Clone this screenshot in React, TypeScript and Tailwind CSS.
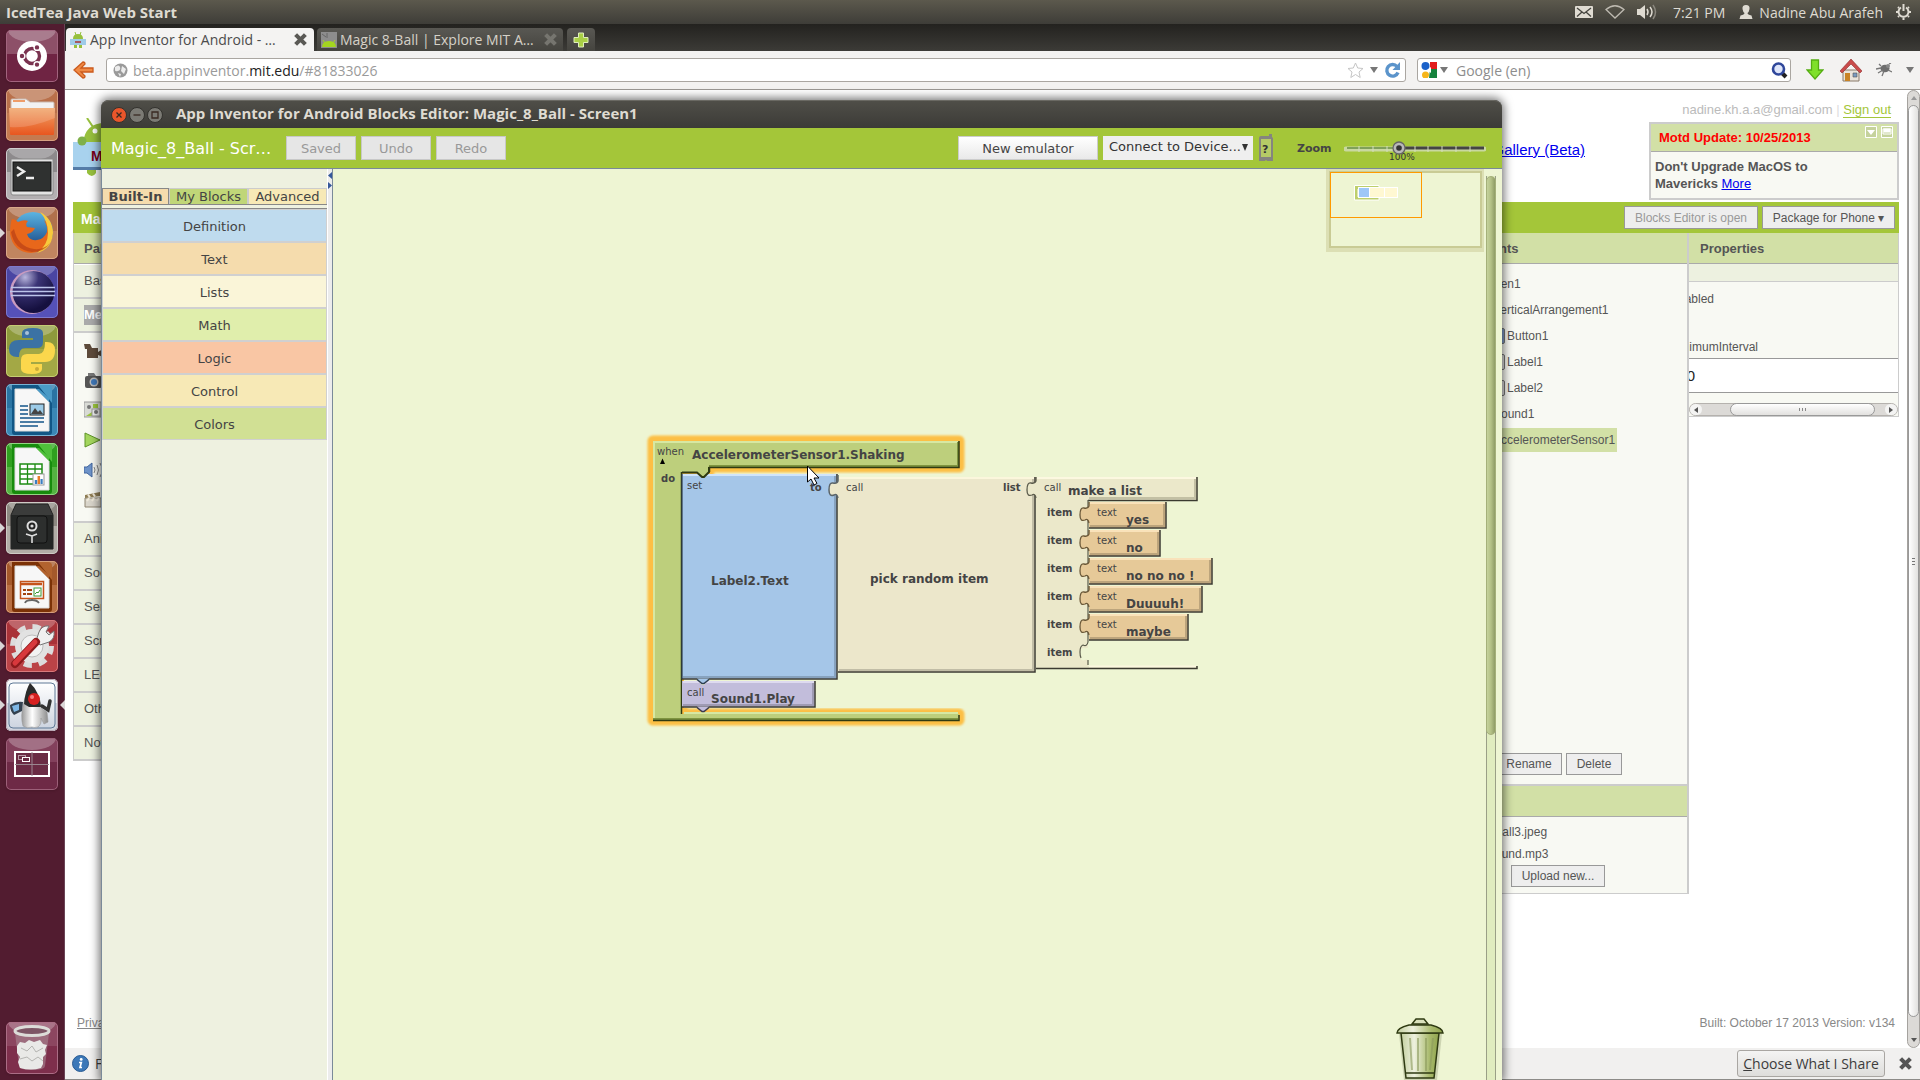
import React from "react";

const UI = "font-['Open_Sans','Noto_Sans',sans-serif]";
const ARIAL = "font-['Liberation_Sans',Arial,sans-serif]";
const DEJAVU = "font-['DejaVu_Sans',Verdana,sans-serif]";

/* ---------- launcher ---------- */

function Page({ dark, mid }: { dark: string; mid: string }) {
  return (
    <>
      <path d="M6 1h31l9 9v38a3 3 0 0 1-3 3H9a3 3 0 0 1-3-3z" fill={dark} />
      <path d="M32 1h10a4 4 0 0 1 4 4v14z" fill={mid} />
      <path d="M9 5h21l13 13v29H9z" fill="#f7f7f7" stroke="#ddd" />
      <path d="M30 5l13 13V14L33 5z" fill={mid} />
    </>
  );
}

type Tile = { name: string; from: string; to: string; edge: string; left?: boolean; right?: boolean; art: React.ReactNode };

const tiles: Tile[] = [
  {
    name: "Dash home", from: "#8d5068", to: "#6f2443", edge: "#a2647e",
    art: (
      <>
        <circle cx="26" cy="26" r="15" fill="#fff" />
        <circle cx="26" cy="26" r="7.5" fill="none" stroke="#7a3350" strokeWidth="3.4" />
        <g fill="#7a3350" stroke="#fff" strokeWidth="1.4">
          <circle cx="16" cy="26" r="2.9" /><circle cx="31" cy="17.4" r="2.9" /><circle cx="31" cy="34.6" r="2.9" />
        </g>
      </>
    ),
  },
  {
    name: "Home folder", from: "#b9704a", to: "#c47a50", edge: "#d7a183",
    art: (
      <>
        <path d="M5 11q0-1 1-1h14l4 3h23q1 0 1 1v8H5z" fill="#f2f2f2" stroke="#c9b8ae" />
        <path d="M7 12h12" stroke="#ee9d6a" strokeWidth="2" />
        <path d="M3 19h46l-1 26q0 1-1 1H5q-1 0-1-1z" fill="url(#folder)" />
        <path d="M3 19h46v10Q22 40 4 38z" fill="#fff" opacity=".16" />
      </>
    ),
  },
  {
    name: "Terminal", from: "#8d8a8c", to: "#b3afb1", edge: "#d0cdcf",
    art: (
      <>
        <path d="M5 11h42v34q0 2-2 2H7q-2 0-2-2z" fill="#e3e3e3" stroke="#888" />
        <rect x="7" y="14" width="38" height="29" fill="#2f3130" stroke="#111" />
        <path d="M11 19l7 4.500-7 4.500M20 30h8" fill="none" stroke="#eee" strokeWidth="2.400" />
      </>
    ),
  },
  {
    name: "Firefox", from: "#b0714c", to: "#c08560", edge: "#d9a88a", left: true,
    art: (
      <>
        <circle cx="27" cy="25" r="20" fill="url(#globe)" />
        <path d="M6 12q3 0 6 3 6-3 10-1-3 3-1 6l8 1q-2 5-8 6 2 7 10 6 7-1 10-8 1-5-3-12 7 5 7 14 0 17-20 19Q7 45 4 27q0-10 2-15z" fill="#e8671b" />
        <path d="M34 5q13 7 13 21-1 16-16 20 11-8 11-20 0-12-8-21z" fill="#f7c93c" />
        <path d="M5 25q3 18 21 20 12 0 18-9-6 7-16 6Q12 40 8 22z" fill="#b94015" opacity=".7" />
      </>
    ),
  },
  {
    name: "Eclipse", from: "#4a45a3", to: "#5551b8", edge: "#7d79cc",
    art: (
      <>
        <circle cx="26" cy="26" r="22" fill="#c99bc0" />
        <circle cx="27.500" cy="26" r="21" fill="url(#eclipse)" />
        <path d="M5 21.500h44M4 25.500h45M5 29.500h44" stroke="#bcc4ea" strokeWidth="1.300" />
      </>
    ),
  },
  {
    name: "Python", from: "#8e9a3c", to: "#a3a845", edge: "#c6cc74",
    art: (
      <>
        <path d="M16 8q0-5 11-5 10 0 10 5v9q0 6-6 6H19q-6 0-6 9-10 1-10-8 0-9 10-9h14v-2H16z" fill="#3b72a4" />
        <path d="M36 44q0 5-10 5-11 0-11-5v-9q0-6 6-6h12q6 0 6-12 10-1 10 8 0 12-10 12H25v2h11z" fill="#fbd74c" />
        <circle cx="21" cy="8" r="2" fill="#a9c2d8" /><circle cx="31" cy="44" r="2" fill="#c9ab39" />
      </>
    ),
  },
  {
    name: "LibreOffice Writer", from: "#2a74a3", to: "#3a87b5", edge: "#78b2d3",
    art: (
      <>
        <Page dark="#115685" mid="#4a9ac6" />
        <path d="M14 22h8M14 26h8M14 30h8M14 34h24M14 38h24M14 42h18" stroke="#15568a" strokeWidth="1.700" />
        <rect x="24" y="20" width="14" height="11" fill="#9ccbe8" stroke="#222" />
        <path d="M25 30l4-6 3 4 2-2 3 4z" fill="#444" />
      </>
    ),
  },
  {
    name: "LibreOffice Calc", from: "#2fa01f", to: "#55b342", edge: "#93d483",
    art: (
      <>
        <Page dark="#178c0c" mid="#4fc03a" />
        <rect x="14" y="21" width="22" height="20" fill="#fff" stroke="#1e8c14" strokeWidth="1.500" />
        <path d="M14 26h22M14 31h22M14 36h22M21.500 21v20M29 21v20" stroke="#1e8c14" strokeWidth="1.300" />
        <rect x="27" y="31" width="11" height="11" fill="#fff" stroke="#999" />
        <path d="M30 41v-4" stroke="#3b7ec2" strokeWidth="2.500" /><path d="M32.800 41v-8" stroke="#e87c2a" strokeWidth="2.500" /><path d="M35.600 41v-5" stroke="#3b7ec2" strokeWidth="2.200" />
      </>
    ),
  },
  {
    name: "Password safe", from: "#8d8881", to: "#b2ada7", edge: "#cfcbc6", left: true,
    art: (
      <>
        <path d="M10 2h32l5 11v34H5V13z" fill="#3b3c3b" stroke="#222" />
        <path d="M5 13h42v34H5z" fill="#242625" />
        <rect x="11" y="14" width="30" height="27" rx="3" fill="#2d2f2e" stroke="#111" />
        <circle cx="26" cy="24" r="4.500" fill="#222" stroke="#ddd" strokeWidth="2" />
        <circle cx="26" cy="24" r="1.600" fill="#ddd" />
        <path d="M26 34l-6-2M26 34l5-2M26 34v7" stroke="#ddd" strokeWidth="1.600" />
      </>
    ),
  },
  {
    name: "LibreOffice Impress", from: "#a5592b", to: "#b96f42", edge: "#d6a07e",
    art: (
      <>
        <Page dark="#7c3206" mid="#b2632f" />
        <path d="M15 23h21" stroke="#c5531a" strokeWidth="2.500" />
        <rect x="14.500" y="20.500" width="23" height="17" fill="none" stroke="#c5531a" strokeWidth="1.500" />
        <path d="M17 29h3M17 33h3M21 29h5M21 33h5" stroke="#a2430f" strokeWidth="2" />
        <rect x="28" y="27" width="7" height="8" fill="#fff" stroke="#3b9a35" /><path d="M29 33l2-2 1 1 2-3" fill="none" stroke="#3b9a35" />
        <path d="M19 42q1-3 7-3 5 0 7 3M26 38v2" fill="none" stroke="#666" strokeWidth="1.800" />
      </>
    ),
  },
  {
    name: "System tools", from: "#a93238", to: "#bb4347", edge: "#d77a7d", left: true,
    art: (
      <>
        <circle cx="26" cy="26" r="19" fill="none" stroke="#dcdcdc" strokeWidth="6" strokeDasharray="8 6.900" />
        <circle cx="26" cy="26" r="17" fill="#e2e2e2" />
        <circle cx="26" cy="26" r="11" fill="#f2f2f2" stroke="#bbb" />
        <path d="M30 21l3-9q3-7 10-6l-3 6 3 3 5-4q1 8-5 11l-9 3z" fill="#f0f0f0" stroke="#777" />
        <path d="M9 44L30 22" stroke="#8e1a1c" strokeWidth="8" strokeLinecap="round" />
        <path d="M9 43L29 22" stroke="#d8383c" strokeWidth="5" strokeLinecap="round" />
      </>
    ),
  },
  {
    name: "Java Web Start", from: "#f5f6f9", to: "#cfd3dd", edge: "#b9a6b2", left: true, right: true,
    art: (
      <>
        <rect x="3" y="4" width="46" height="45" rx="4" fill="url(#javabg)" stroke="#5e7896" />
        <path d="M24 4q2 3 5 8 6 9 7 18l5 3 1 10-4 2-3-6q1 6-3 9-4 1-6 0-5 2-9-1-3-10 1-24z" fill="url(#duke)" stroke="#999" strokeWidth=".6" />
        <path d="M24 4q-5 8-6 21l5 3h12Q33 12 24 4z" fill="#2b2b2b" />
        <path d="M4 26q6-4 13-3l-1 9-8 4q-4-4-4-10z" fill="#33414f" /><path d="M6 27l7-2v6l-5 2z" fill="#7db6e4" />
        <path d="M36 27l6 4 2-9" fill="none" stroke="#333" strokeWidth="3.500" strokeLinecap="round" />
        <circle cx="28" cy="20" r="6" fill="#d61f1f" /><circle cx="26" cy="18" r="2" fill="#f78080" />
      </>
    ),
  },
  {
    name: "Workspace switcher", from: "#83405c", to: "#6e2a46", edge: "#9c6079",
    art: (
      <>
        <rect x="9" y="14" width="34" height="24" fill="#6a2b44" stroke="#fff" strokeWidth="2" />
        <path d="M26 14v24M9 26.500h34" stroke="#9a8790" />
        <rect x="12.500" y="17.500" width="7" height="4" fill="none" stroke="#b79aa6" /><rect x="16.500" y="19.500" width="7" height="4" fill="#6a2b44" stroke="#fff" />
      </>
    ),
  },
];

const trashTile: Tile = {
  name: "Trash", from: "#8c4660", to: "#7e2f4c", edge: "#ab6d85",
  art: (
    <>
      <path d="M9 11l4 33q0 4 13 4t13-4l4-33z" fill="#a98793" opacity=".6" />
      <path d="M11 24l3-4 5 1 4-3 5 2 6-2 3 4 4 1-2 5 1 4-3 3v7l-2 4q-10 3-21 0l-2-6 2-5-3-4z" fill="#e9e9e7" />
      <path d="M15 26l6 3 5-5 4 6 7-4M14 37l7-2 5 4 6-4 5 4" stroke="#b5b5b2" fill="none" />
      <ellipse cx="26" cy="9" rx="17" ry="4.500" fill="#7d5565" stroke="#dcdcd8" strokeWidth="3" />
    </>
  ),
};

function LauncherTile({ t }: { t: Tile }) {
  return (
    <button aria-label={t.name} className="relative block h-[52px] w-full shrink-0">
      {t.left && <span className="absolute left-0 top-[21px] border-y-[5px] border-l-[5px] border-y-transparent border-l-[#d9d5d6]" />}
      {t.right && <span className="absolute right-0 top-[21px] border-y-[5px] border-r-[5px] border-y-transparent border-r-[#d9d5d6]" />}
      <svg viewBox="0 0 52 52" className="ml-1.5 h-[52px] w-[52px] overflow-hidden rounded-[5px] shadow">
        <rect width="52" height="52" fill={t.from} />
        <rect y="24" width="52" height="28" fill={t.to} />
        <ellipse cx="26" cy="0" rx="24" ry="12" fill="#fff" opacity=".25" />
        {t.art}
        <rect x=".5" y=".5" width="51" height="51" rx="4.500" fill="none" stroke={t.edge} />
      </svg>
    </button>
  );
}

function Launcher() {
  return (
    <nav className="flex w-[65px] shrink-0 flex-col gap-[7px] bg-[#521c30] pb-1.5 pt-1.5 shadow-[inset_-1px_0_0_#6a4456]">
      <svg width="0" height="0" className="absolute">
        <defs>
          <linearGradient id="folder" x2="0" y2="1"><stop offset="0" stopColor="#f0a468" /><stop offset="1" stopColor="#e8561f" /></linearGradient>
          <linearGradient id="globe" x2="0" y2="1"><stop offset="0" stopColor="#5bb4e2" /><stop offset="1" stopColor="#123c7c" /></linearGradient>
          <radialGradient id="eclipse" cx=".3" cy=".15" r=".8"><stop offset="0" stopColor="#b9b6de" /><stop offset=".4" stopColor="#3b3476" /><stop offset="1" stopColor="#15103f" /></radialGradient>
          <linearGradient id="javabg" x2="0" y2="1"><stop offset="0" stopColor="#fff" /><stop offset="1" stopColor="#cdd4e0" /></linearGradient>
          <linearGradient id="duke" x2="1" y2="0"><stop offset="0" stopColor="#9a9a9a" /><stop offset=".4" stopColor="#fff" /><stop offset="1" stopColor="#8c8c8c" /></linearGradient>
        </defs>
      </svg>
      {tiles.map((t) => <LauncherTile key={t.name} t={t} />)}
      <div className="mt-auto"><LauncherTile t={trashTile} /></div>
    </nav>
  );
}

/* ---------- top panel ---------- */

function TopPanel() {
  return (
    <header className={`flex h-6 shrink-0 items-center bg-gradient-to-b from-[#5c594d] to-[#3e3d38] px-1.5 text-[14px] text-[#dfdbd2] ${UI}`}>
      <h1 className="text-[15px] font-bold">IcedTea Java Web Start</h1>
      <div className="ml-auto flex items-center">
        <svg width="18" height="12" viewBox="0 0 18 12"><rect width="18" height="12" rx="1" fill="#dfdbd2" /><path d="M2 2l7 5.500L16 2M2 10.500l5-4.500M16 10.500L11 6" fill="none" stroke="#45443e" strokeWidth="1.300" /></svg>
        <svg width="20" height="14" viewBox="0 0 20 14" className="ml-3"><path d="M1 4.500Q10-3 19 4.500L10 13z" fill="none" stroke="#bdb9b0" strokeWidth="1.300" /></svg>
        <svg width="20" height="16" viewBox="0 0 20 16" className="ml-3"><path d="M0 5h3l5-4v14l-5-4H0z" fill="#dfdbd2" /><path d="M10 5q2 3 0 6M13 3q4 5 0 10" fill="none" stroke="#dfdbd2" strokeWidth="1.500" /><path d="M16 1q5 7 0 14" fill="none" stroke="#8a877e" strokeWidth="1.500" /></svg>
        <span className="ml-4">7:21 PM</span>
        <svg width="14" height="14" viewBox="0 0 14 14" className="ml-3.5"><path d="M7 0q4 0 3.500 4Q10 7 8.500 8q0 1.500 4 2.500l1 3.500H.5l1-3.500q4-1 4-2.500Q4 7 3.500 4 3 0 7 0z" fill="#dfdbd2" /></svg>
        <span className="ml-1.5">Nadine Abu Arafeh</span>
        <svg width="17" height="16" viewBox="0 0 17 16" className="ml-3 mr-0.5"><path d="M6 3.500a5 5 0 1 0 5 0" fill="none" stroke="#dfdbd2" strokeWidth="2" /><path d="M8.500 0v7M1 8h2M14 8h2M3 3l1 1M14 3l-1 1M3 13l1-1M14 13l-1-1M8.500 13.500V16" stroke="#dfdbd2" strokeWidth="2" /></svg>
      </div>
    </header>
  );
}

/* ---------- browser ---------- */

function Android({ className }: { className: string }) {
  return (
    <svg viewBox="0 0 16 16" className={className}>
      <path d="M3 7q0-5 5-5t5 5z" fill="#97c03d" /><path d="M5 0l1 3M11 0l-1 3" stroke="#97c03d" /><rect x="0" y="7" width="16" height="6" fill="#9fcbe8" /><path d="M4 13h3v3H4zM9 13h3v3H9z" fill="#97c03d" /><path d="M5 10h6" stroke="#a33" strokeWidth="1.500" />
    </svg>
  );
}

function Cross({ color }: { color: string }) {
  return <svg width="13" height="13" viewBox="0 0 12 12"><path d="M1.500 1.500l9 9M10.500 1.500l-9 9" stroke={color} strokeWidth="3.800" /></svg>;
}

function BrowserChrome() {
  return (
    <div className={UI}>
      <div className="flex h-[27px] items-end bg-gradient-to-b from-[#23221f] to-[#3c3b37] pl-[1px] text-[14px]">
        <div className="flex h-[23px] w-[248px] items-center rounded-t-[4px] bg-[#f4f3f2] pl-1 pr-[7px] text-[#4c4c4c]">
          <Android className="mr-1 h-4 w-4" />
          <span className="whitespace-nowrap">App Inventor for Android - …</span>
          <button aria-label="Close tab" className="ml-auto"><Cross color="#5a5955" /></button>
        </div>
        <div className="ml-[3px] flex h-[23px] w-[246px] items-center rounded-t-[4px] bg-gradient-to-b from-[#595853] to-[#45443f] pl-1 pr-1.5 text-[#d5d1c8]">
          <svg viewBox="0 0 16 16" className="mr-[3px] h-4 w-4"><rect width="16" height="16" fill="#8d8d8d" /><path d="M1 2l4 3M6 1v5" stroke="#666" /><path d="M1 15q0-6 7-6t7 6z" fill="#a4d61f" /><path d="M2 8l2 3M14 8l-2 3" stroke="#a4d61f" /></svg>
          <span className="whitespace-nowrap">Magic 8-Ball | Explore MIT A…</span>
          <button aria-label="Close tab" className="ml-auto"><Cross color="#76756f" /></button>
        </div>
        <button aria-label="New tab" className="ml-1 flex h-[23px] w-7 items-center justify-center rounded-t-[4px] bg-gradient-to-b from-[#595853] to-[#45443f]">
          <svg width="16" height="16" viewBox="0 0 16 16"><path d="M5.500 1h5v4.500H15v5h-4.500V15h-5v-4.500H1v-5h4.500z" fill="#a9cf46" stroke="#e0eebb" /></svg>
        </button>
      </div>
      <div className="flex h-[39px] items-center border-b border-[#9b9894] bg-[#f3f2f1] pl-[7px] pr-1.5 text-[14px]">
        <button aria-label="Back"><svg width="23" height="20" viewBox="0 0 23 20"><path d="M2 10l9-8q2 0 2 2L9 8h12v4H9l4 4q0 2-2 2z" fill="#f08a45" stroke="#cb5a1c" strokeWidth="1.300" /></svg></button>
        <label className="ml-[11px] flex h-6 flex-1 items-center rounded-[3px] border border-[#aaa6a1] bg-white pl-1.5 pr-1">
          <svg width="15" height="15" viewBox="0 0 15 15"><circle cx="7.500" cy="7.500" r="7" fill="#9a9a9a" /><path d="M2 4q4-3 5 0t-2 4-3-1zM9 3l4 3-2 5-3-3zM5 10l3 1-1 3z" fill="#ececec" /></svg>
          <span className="ml-[5px] flex-1 text-[#9a9a9a]">beta.appinventor.<span className="text-[#222]">mit.edu</span>/#81833026</span>
          <svg width="17" height="17" viewBox="0 0 17 17"><path d="M8.500 1l2.200 5 5.300.5-4 3.500 1.200 5.500-4.700-3-4.700 3L5 10 1 6.500 6.300 6z" fill="#fff" stroke="#c5c5c5" /></svg>
          <span className="ml-1.5 border-x-[4px] border-t-[6px] border-x-transparent border-t-[#777]" />
          <svg width="17" height="17" viewBox="0 0 17 17" className="ml-1.5"><path d="M13 4.500A5.800 5.800 0 1 0 14 10.500" fill="none" stroke="#5b94cb" strokeWidth="3.400" /><path d="M16 0v8H8.500z" fill="#5b94cb" /></svg>
        </label>
        <label className="ml-[11px] flex h-6 w-[374px] items-center rounded-[3px] border border-[#aaa6a1] bg-white pl-[3px] pr-0.5">
          <svg width="16" height="16" viewBox="0 0 16 16"><rect width="16" height="16" fill="#fff" /><path d="M9 0h7v8H9z" fill="#e21d1d" /><path d="M9 7h7v9H8z" fill="#16833d" /><circle cx="4.500" cy="4" r="4" fill="#1b62c9" /><circle cx="4.500" cy="13" r="3.500" fill="#f6b51b" /><path d="M6 8l4-3v6z" fill="#fff" /></svg>
          <span className="ml-[3px] border-x-[4px] border-t-[6px] border-x-transparent border-t-[#777]" />
          <input aria-label="Search" placeholder="Google (en)" className="ml-2 min-w-0 flex-1 outline-none placeholder:text-[#8d8d8d]" />
          <svg width="17" height="17" viewBox="0 0 17 17"><path d="M10 10l5 5" stroke="#222" strokeWidth="4" /><circle cx="7.500" cy="7" r="5.500" fill="#dfe6fa" stroke="#2f479b" strokeWidth="2.600" /></svg>
        </label>
        <svg width="18" height="22" viewBox="0 0 18 22" className="ml-[15px]"><path d="M5.500 1h7v10H17l-8 9-8-9h4.500z" fill="#7fe02a" stroke="#55ad12" strokeWidth="1.300" /></svg>
        <svg width="22" height="23" viewBox="0 0 22 23" className="ml-4"><path d="M3 11h16v11H3z" fill="#e9e4db" stroke="#8a7a6b" /><path d="M0 12L11 0l11 12-2 2-9-9-9 9z" fill="#c94b4b" stroke="#8e2e2e" strokeWidth=".6" /><path d="M5 14h5v8H5z" fill="#c98325" /><path d="M13 14h4v4h-4z" fill="#7a9cc0" stroke="#555" strokeWidth=".6" /></svg>
        <svg width="16" height="14" viewBox="0 0 16 14" className="ml-3.5"><ellipse cx="9" cy="5.500" rx="4.500" ry="3.800" fill="#6d6d6d" /><path d="M0 6l5-1M2 10l5-3M6 13l2-5M13 1l2-1M12 7l4 2M5 3L3 1" stroke="#777" strokeWidth="1.300" /><circle cx="12" cy="3" r="2" fill="#888" /></svg>
        <span className="ml-3.5 border-x-[4px] border-t-[6px] border-x-transparent border-t-[#777]" />
      </div>
    </div>
  );
}

const header = "flex h-[31px] items-center border-b border-[#aaa] bg-[#d2e0a6] pt-0.5 text-[13px] font-bold text-[#555]";
const webButton = "border border-[#999] bg-[#eee] text-[12px]";

const paletteMedia = [
  <svg key="v" width="20" height="18" viewBox="0 0 20 18"><path d="M0 3h6l2 4h6v10H3V8H1zM14 11l5-3v8l-5-2z" fill="#5e4b3b" /></svg>,
  <svg key="c" width="18" height="18" viewBox="0 0 18 18"><rect x="1" y="5" width="17" height="12" rx="2" fill="#555" /><path d="M4 5V2h6l2 3z" fill="#777" /><circle cx="10" cy="11" r="4.500" fill="#bbb" /><circle cx="10" cy="11" r="3" fill="#3f78b8" /></svg>,
  <svg key="p" width="18" height="18" viewBox="0 0 18 18"><rect y="1" width="17" height="15" fill="#d9dbd6" stroke="#999" /><circle cx="5" cy="6" r="2" fill="#777" /><path d="M2 15l6-4 3 4zM9 3h5v4H9z" fill="#9bc53d" /><rect x="8" y="8" width="8" height="7" fill="#eee" stroke="#999" /><circle cx="12" cy="11" r="2" fill="#777" /></svg>,
  <svg key="s" width="18" height="18" viewBox="0 0 18 18"><path d="M1 2l15 7L1 16z" fill="#a4d65e" stroke="#5e9428" /></svg>,
  <svg key="o" width="18" height="18" viewBox="0 0 18 18"><path d="M0 6h3l5-4v14l-5-4H0z" fill="#6e93c9" stroke="#41659d" /><path d="M10 6q2 3 0 6M13 4q3 5 0 10M16 2q4 7 0 14" fill="none" stroke="#888" /></svg>,
  <svg key="k" width="18" height="18" viewBox="0 0 18 18"><path d="M1 7h16v9H1z" fill="#d9d5cb" stroke="#8f8572" /><path d="M1 4l15-3v4L1 7z" fill="#8f7d55" /><path d="M4 3.500l2 3M9 2.500l2 3M5 7l-2 3M10 7l-2 3M15 7l-2 3" stroke="#efe9da" strokeWidth="2" /></svg>,
];

function PaletteRow({ children }: { children: React.ReactNode }) {
  return <div className="flex h-[34px] items-center border-b-2 border-[#ccc] bg-[#edf1e0] pl-2.5">{children}</div>;
}

function TreeItem({ name, indent, icon }: { name: string; indent: string; icon?: string }) {
  return (
    <li className={`flex h-[26px] items-center ${indent}`}>
      {icon && <span className={`mr-0.5 h-4 w-4 rounded-[2px] border border-[#777] ${icon}`} />}
      {name}
    </li>
  );
}

function InventorPage() {
  return (
    <main className={`flex min-h-0 flex-1 bg-white text-[13px] text-[#555] ${ARIAL}`}>
      <div className="flex min-w-0 flex-1 flex-col pl-2">
        <div className="mr-2 flex h-[112px] shrink-0 justify-between">
          <div className="relative mt-7 h-[62px] w-16">
            <svg width="64" height="62" viewBox="0 0 64 62">
              <path d="M14 0l6 9M50 0l-6 9" stroke="#97c03d" strokeWidth="2" /><path d="M10 25q2-20 22-20t22 20z" fill="#97c03d" /><circle cx="22" cy="13" r="2.500" fill="#fff" />
              <path d="M14 50h9v5q-4 6-9 0z" fill="#97c03d" /><rect y="24" width="64" height="28" fill="#a8d2ee" /><path d="M0 52h64v-3H0z" fill="#557ca8" /><circle cx="9" cy="23" r="4.500" fill="#7fb04a" />
            </svg>
            <span className="absolute left-[18px] top-[28px] text-[14px] font-bold text-[#7a0018]">MIT</span>
          </div>
          <div className="flex">
            <a href="#gallery" className="mr-16 mt-[49px] text-[15px] text-[#0000ee] underline">My Gallery (Beta)</a>
            <div className="w-[250px]">
              <p className="mr-2 mt-2.5 h-[22px] text-right text-[#bbb]">nadine.kh.a.a@gmail.com <span className="text-[#ddd]">|</span> <a href="#out" className="border-b border-[#a4c639] text-[#a4c639]">Sign out</a></p>
              <section className="border-2 border-[#ccc] bg-[#f8f9f3]">
                <div className="flex h-7 items-center border-b border-[#aaa] bg-[#d2e0a6] pl-2">
                  <h2 className="flex-1 font-bold text-[#f00]">Motd Update: 10/25/2013</h2>
                  <svg width="30" height="12" viewBox="0 0 30 12" className="mb-3 mr-0.5"><path d="M.5.5h11v11H.5zM16.500.5h11v11h-11z" fill="#c5d29c" stroke="#fff" /><path d="M2 4h8l-4 5zM18.500 2.500h7v4h-7z" fill="#fff" /><path d="M18 3h8v5h-8z" fill="none" stroke="#fff" /></svg>
                </div>
                <p className="h-[46px] pl-1 pt-1.5 font-bold leading-[17px]">Don't Upgrade MacOS to<br />Mavericks <a href="#more" className="font-normal text-[#0000ee] underline">More</a></p>
              </section>
            </div>
          </div>
        </div>
        <div className="mr-2 flex min-h-0 flex-1 flex-col">
          <div className="flex h-[31px] shrink-0 items-center bg-[#a4c639] pl-2 pr-1">
            <span className="flex-1 pt-1 text-[14px] font-bold text-white">Magic_8_Ball</span>
            <button disabled className={`${webButton} h-[23px] w-[134px] text-[#999]`}>Blocks Editor is open</button>
            <button className={`${webButton} ml-1 h-[23px] w-[133px]`}>Package for Phone ▾</button>
          </div>
          <div className="flex items-start">
            <aside className="w-[200px] border-l border-[#ccc]">
              <h2 className={`${header} pl-2.5`}>Palette</h2>
              <div className="pt-px">
                <PaletteRow>Basic</PaletteRow>
                <PaletteRow><span className="bg-[#aaa] font-bold text-white">Media</span></PaletteRow>
                <div className="flex h-[190px] flex-col gap-3 border-b-2 border-[#ccc] bg-[#f8f9f3] pl-2.5 pt-2">{paletteMedia}</div>
                {["Animation", "Social", "Sensors", "Screen Arrangement", "LEGO® MINDSTORMS®", "Other stuff", "Not ready for prime time"].map((s) => <PaletteRow key={s}>{s}</PaletteRow>)}
              </div>
            </aside>
            <div className="flex-1" />
            <div className="w-[260px] border-b border-r-2 border-[#ccc] bg-[#f8f9f3] text-[12px]">
              <h2 className={`${header} pl-2.5`}>Components</h2>
              <ul className="h-[489px] pt-[7px]">
                <TreeItem name="Screen1" indent="pl-[47px]" />
                <TreeItem name="VerticalArrangement1" indent="pl-[64px]" />
                <TreeItem name="Button1" indent="pl-[60px]" icon="bg-[#7f9cc9]" />
                <TreeItem name="Label1" indent="pl-[60px]" icon="bg-[#ddd]" />
                <TreeItem name="Label2" indent="pl-[60px]" icon="bg-[#ddd]" />
                <TreeItem name="Sound1" indent="pl-[64px]" />
                <li className="flex h-[26px] items-center pl-[64px]"><span className="bg-[#d2e0a6] pr-0.5 py-1 leading-4">AccelerometerSensor1</span></li>
              </ul>
              <div className="flex h-[31px] justify-end gap-1 pr-[65px]">
                <button className={`${webButton} h-[22px] w-[66px]`}>Rename</button>
                <button className={`${webButton} h-[22px] w-[56px]`}>Delete</button>
              </div>
              <h2 className={`${header} h-[33px] border-t-2 border-t-[#ccc] pl-2.5`}>Media</h2>
              <div className="h-[76px] pt-1">
                <p className="pl-[60px] leading-[22px]">8ball3.jpeg</p>
                <p className="pl-[60px] leading-[22px]">sound.mp3</p>
                <button className={`${webButton} ml-[82px] h-[22px] w-[94px]`}>Upload new...</button>
              </div>
            </div>
            <div className="w-[210px] border-b border-r border-[#ccc] bg-[#f8f9f3] text-[12px]">
              <h2 className={`${header} pl-[11px]`}>Properties</h2>
              <div className="h-[18px] border-b border-[#ccc] bg-[#edf1e0]" />
              <div className="overflow-hidden">
                <p className="ml-[-19px] mt-2 h-12">Enabled</p>
                <label className="ml-[-19px] block h-5" htmlFor="interval">MinimumInterval</label>
                <input id="interval" defaultValue="400" className="ml-[-20px] block h-[35px] w-[230px] border border-[#999] bg-white text-[15px] text-[#222]" />
              </div>
              <div className="mt-2.5 flex h-[13px] items-center justify-between rounded-full border border-[#b5b2ae] bg-[#dcdad7]">
                <span className="flex h-full w-3 items-center justify-center rounded-full bg-[#f4f4f3]"><i className="border-y-[3px] border-r-[4px] border-y-transparent border-r-[#555]" /></span>
                <span className="ml-7 flex h-[13px] flex-1 items-center justify-center gap-0.5 rounded-full border border-[#999] bg-gradient-to-b from-white to-[#e2e1df]"><i className="h-[3px] w-px bg-[#888]" /><i className="h-[3px] w-px bg-[#888]" /><i className="h-[3px] w-px bg-[#888]" /></span>
                <span className="ml-2.5 flex h-full w-3 items-center justify-center rounded-full bg-[#f4f4f3]"><i className="border-y-[3px] border-l-[4px] border-y-transparent border-l-[#555]" /></span>
              </div>
            </div>
          </div>
          <div className="mb-4 mt-auto flex justify-between pl-1 pr-1 text-[12px] text-[#888]">
            <a href="#privacy" className="underline">Privacy Policy and Terms of Use</a>
            <span>Built: October 17 2013 Version: v134</span>
          </div>
        </div>
      </div>
      <div className="flex w-[13px] shrink-0 flex-col items-center rounded-full border border-[#a5a29e] bg-[#dcdad7]">
        <span className="flex h-3.5 items-center"><i className="border-x-[3px] border-b-[4px] border-x-transparent border-b-[#999]" /></span>
        <span className="flex w-full flex-1 flex-col items-center justify-center gap-0.5 rounded-full border border-[#999] bg-gradient-to-r from-white to-[#e2e1df]"><i className="h-px w-[3px] bg-[#777]" /><i className="h-px w-[3px] bg-[#777]" /><i className="h-px w-[3px] bg-[#777]" /></span>
        <span className="mt-4 flex h-3.5 items-center"><i className="border-x-[3px] border-t-[4px] border-x-transparent border-t-[#555]" /></span>
      </div>
    </main>
  );
}

function NoticeBar() {
  return (
    <footer className={`flex h-8 shrink-0 items-center border-b border-[#8d8b88] bg-[#f1f0ef] pl-[7px] pr-2 text-[14px] text-[#3c3c3c] ${UI}`}>
      <svg width="17" height="17" viewBox="0 0 17 17" className="mr-1.5"><circle cx="8.500" cy="8.500" r="8" fill="#3c78b8" stroke="#2a5b93" /><circle cx="9.200" cy="4.400" r="1.400" fill="#fff" /><path d="M7 7.500h2.300L8 12.500h2" fill="none" stroke="#fff" strokeWidth="1.700" /></svg>
      <span className="flex-1">Firefox automatically sends some data to Mozilla</span>
      <button className="h-[27px] w-[148px] whitespace-nowrap rounded-[3px] border border-[#a9a6a2] bg-gradient-to-b from-[#f4f4f3] to-[#dedddb] text-center"><span className="underline">C</span>hoose What I Share</button>
      <button aria-label="Dismiss" className="ml-3.5"><Cross color="#555" /></button>
    </footer>
  );
}

/* ---------- blocks editor ---------- */

const drawers = [
  ["Definition", "bg-[#bfdbee]"],
  ["Text", "bg-[#f5dcad]"],
  ["Lists", "bg-[#faf5d8]"],
  ["Math", "bg-[#e0eeac]"],
  ["Logic", "bg-[#f9c6a4]"],
  ["Control", "bg-[#f7e9b6]"],
  ["Colors", "bg-[#d1e094]"],
];

function plug() {
  return "q-1-5-4-3-5 2-5-5 0-8 4-7 4 1 5-2";
}
function pluggedBlock(x: number, y: number, right: number, bottom: number) {
  return `M${x} ${y}H${right}V${bottom}H${x}V${y + 21}${plug()}Z`;
}

function Shape({ d, fill, light, x, y, right, bottom }: { d: string; fill: string; light: string; x: number; y: number; right: number; bottom: number }) {
  return (
    <g fill="none">
      <path d={d} fill={fill} />
      <path d={`M${x + 1} ${y + 1}H${right - 1}`} stroke={light} strokeWidth="2" />
      <path d={`M${right - 2} ${y + 2}V${bottom - 2}H${x + 1}`} stroke="#000" strokeOpacity=".18" strokeWidth="2" />
      <path d={`M${right} ${y}V${bottom}H${x}`} stroke="#3b3a33" strokeWidth="1.500" />
    </g>
  );
}

const answers: [string, number][] = [["yes", 1166], ["no", 1160], ["no no no !", 1212], ["Duuuuh!", 1202], ["maybe", 1188]];

function Blocks() {
  const green = "M653 441H959V467H709V472L707 472L704 476H702L698 472H682V714H959V720H653Z";
  const blue = "M682 474H698L702 478H704L708 474H837V679H708L704 683H702L698 679H682Z";
  const sound = "M682 681H698L702 685H704L708 681H815V707H708L704 711H702L698 707H682Z";
  const make = "M1036 477H1197V500H1088V666H1197V668H1036V498q-1-5-4-3-5 2-5-5 0-8 4-7 4 1 5-2Z";
  return (
    <svg width="600" height="310" viewBox="640 425 600 310" className={`absolute left-[307px] top-[256px] ${DEJAVU}`}>
      <defs>
        <filter id="soft" x="-10%" y="-10%" width="120%" height="120%"><feGaussianBlur stdDeviation="1" /></filter>
      </defs>
      <path d={green} fill="#fcbf45" stroke="#fcbf45" strokeWidth="11" strokeLinejoin="round" filter="url(#soft)" />
      <path d="M684 474H970V708H684Z" fill="#eef5d3" />
      <path d={green} fill="#bdcf7c" />
      <path d="M654 719V442H958M684 713H958" fill="none" stroke="#d7e8a2" strokeWidth="2" />
      <path d="M958 442V466H709M653 719H958" fill="none" stroke="#7f9440" strokeWidth="2" />
      <path d="M959 441V467.500H709.500V472M653 720.500H959V715M681.500 714V472" fill="none" stroke="#2f3a12" strokeWidth="1.500" />
      <Shape d={blue} fill="#a5c6e8" light="#cfe4fa" x={682} y={474} right={837} bottom={679} />
      <path d="M682 474V679" stroke="#2d3d50" strokeWidth="1.200" />
      <path d="M697 470V472.500L702 477H704L709 472.500V470Z" fill="#bdcf7c" />
      <path d="M682 472.500H697L702 477H704L709 472V467" fill="none" stroke="#2f3a12" strokeWidth="2" />
      <Shape d={sound} fill="#c2bddb" light="#dedaf0" x={682} y={681} right={815} bottom={707} />
      <path d="M697 678.500L702 683.500H704L709 678.500" fill="#a5c6e8" />
      <path d="M697 679.500L702 683.500H704L709 679.500" fill="none" stroke="#2d3d50" strokeWidth="1.500" />
      <path d="M697 706.500L702 711.500H704L709 706.500" fill="#c2bddb" />
      <path d="M697 707.500L702 711.500H704L709 707.500" fill="none" stroke="#3b3a4c" strokeWidth="1.500" />
      <Shape d={pluggedBlock(838, 477, 1035, 672)} fill="#ece7cb" light="#fbf6dc" x={838} y={477} right={1035} bottom={672} />
      <path d={`M838 498${plug()}V475`} fill="none" stroke="#5b6468" strokeWidth="1.500" />
      <path d={make} fill="#ebe8ca" />
      <path d="M1037 478H1196M1089 666.500H1196" stroke="#fcf8e0" strokeWidth="2" />
      <path d="M1195 479V498H1089" fill="none" stroke="#c3c0a4" strokeWidth="2" />
      <path d="M1197 477V500.500H1088M1036 668.500H1197V666" fill="none" stroke="#3b3a30" strokeWidth="1.500" />
      <path d={`M1036 498${plug()}V477`} fill="none" stroke="#5b5b4b" strokeWidth="1.300" />
      <path d={`M1089 663${plug()}V663Z`} fill="#eef5d3" />
      <path d="M1088 500V642q-1 5-5 3-3 1-3 7 0 4 1 6M1088 660v5" fill="none" stroke="#5b5b4b" strokeWidth="1.200" />
      {answers.map(([word, right], i) => {
        const y = 502 + i * 28;
        return (
          <g key={word}>
            <Shape d={pluggedBlock(1089, y, right, y + 26)} fill="#e6c998" light="#f9e2ba" x={1089} y={y} right={right} bottom={y + 26} />
            <path d={`M1089 ${y + 21}${plug()}V${y}`} fill="none" stroke="#6b5838" strokeWidth="1.300" />
            <text x="1097" y={y + 14} fontSize="10" fill="#444">text</text>
            <text x="1126" y={y + 22} fontSize="12" fontWeight="bold" fill="#444">{word}</text>
          </g>
        );
      })}
      <g fontSize="10" fill="#444">
        <text x="657" y="455">when</text>
        <text x="687" y="489">set</text>
        <text x="687" y="696">call</text>
        <text x="846" y="491">call</text>
        <text x="1044" y="491">call</text>
        <g fontWeight="bold">
          <text x="661" y="482">do</text>
          <text x="810" y="491">to</text>
          <text x="1003" y="491">list</text>
          {[0, 1, 2, 3, 4, 5].map((i) => <text key={i} x="1047" y={516 + i * 28}>item</text>)}
        </g>
      </g>
      <path d="M662.500 458.500l2.500 5.500h-5z" fill="#000" />
      <g fontSize="12" fontWeight="bold" fill="#444">
        <text x="692" y="459">AccelerometerSensor1.Shaking</text>
        <text x="711" y="585">Label2.Text</text>
        <text x="870" y="583">pick random item</text>
        <text x="1068" y="495">make a list</text>
        <text x="711" y="703">Sound1.Play</text>
      </g>
      <path d="M807.500 466v16l3.500-3 3 6 3-1.500-3-5.500h5z" fill="#fff" stroke="#000" />
    </svg>
  );
}

function MiniMap() {
  return (
    <svg width="158" height="84" viewBox="0 0 158 84" className="absolute right-[18px] top-0">
      <rect x="2" y="1" width="154" height="80" fill="#eef5d3" stroke="#dcdfb4" strokeWidth="4" />
      <rect x="4" y="3" width="151" height="75" fill="#eef5d3" stroke="#c9cb95" strokeWidth="2" />
      <path d="M28.500 16.500H53V20H32V28H53V31H28.500z" fill="#bdcf6c" stroke="#fff" />
      <rect x="32.500" y="18.500" width="11" height="10" fill="#9ec7f7" stroke="#fff" />
      <rect x="43.500" y="18.500" width="15" height="10" fill="#fff8d2" stroke="#fff" /><rect x="58.500" y="18.500" width="13" height="10" fill="#fff8d2" stroke="#fff" />
      <rect x="4.500" y="3.500" width="91" height="45" fill="none" stroke="#ff9a00" />
    </svg>
  );
}

function Trash() {
  return (
    <svg width="56" height="62" viewBox="0 0 56 62" className="absolute bottom-0 right-[54px]">
      <defs><linearGradient id="can"><stop offset="0" stopColor="#c3cf9f" /><stop offset=".35" stopColor="#eef1de" /><stop offset=".75" stopColor="#a9ba6d" /><stop offset="1" stopColor="#8fa34d" /></linearGradient></defs>
      <path d="M7 16h43l-5 46H12z" fill="#6b7350" opacity=".25" />
      <path d="M9 15h38l-5 45H14z" fill="url(#can)" stroke="#2f3a12" strokeWidth="1.500" />
      <path d="M18 20l2 32M26 20v33M34 20v33M41 20l-3 32" stroke="#8b9a5c" strokeWidth="2" opacity=".6" />
      <path d="M13.500 55h29" stroke="#2f3a12" strokeWidth="1.500" />
      <path d="M5 15q0-5 12-8h22q12 3 12 8z" fill="url(#can)" stroke="#2f3a12" strokeWidth="1.500" />
      <path d="M20 6l4-5h8l4 5z" fill="#dbe2bd" stroke="#2f3a12" strokeWidth="1.500" />
    </svg>
  );
}

const disabled = "h-6 w-[70px] border border-[#c8c8c8] bg-[#e6e6e6] pt-0.5 text-[#999]";

function BlocksEditor() {
  return (
    <section className={`absolute bottom-0 left-[101px] right-[418px] top-[100px] flex flex-col rounded-t-[8px] bg-[#3c3b37] text-[13px] text-[#444] shadow-[0_0_10px_2px_rgba(0,0,0,0.55)] ${DEJAVU}`}>
      <div className={`flex h-7 shrink-0 items-center gap-[2px] rounded-t-[8px] border-t border-[#6a6963] bg-gradient-to-b from-[#4f4e48] to-[#3c3b37] pl-[10px] ${UI}`}>
        {[["Close", "#e9562b", "M5.500 5.500l5 5M10.500 5.500l-5 5"], ["Minimize", "#7b7a74", "M4.500 8h7"], ["Maximize", "#7b7a74", "M5 5h6v6H5z"]].map(([name, fill, d]) => (
          <button key={name} aria-label={name}><svg width="16" height="16" viewBox="0 0 16 16"><circle cx="8" cy="8" r="7.500" fill={fill} stroke="#33322e" /><path d={d} fill="none" stroke="#3a2a22" strokeWidth="1.300" /></svg></button>
        ))}
        <h2 className="ml-[11px] pb-0.5 text-[15px] font-bold text-[#dfdbd2]">App Inventor for Android Blocks Editor: Magic_8_Ball - Screen1</h2>
      </div>
      <div className="flex h-10 shrink-0 items-center bg-[#a4c639] pl-2.5 pr-4">
        <span className="w-[175px] pt-0.5 text-[16px] text-white">Magic_8_Ball - Scr…</span>
        <div className="flex gap-[5px]">
          <button disabled className={disabled}>Saved</button>
          <button disabled className={disabled}>Undo</button>
          <button disabled className={disabled}>Redo</button>
        </div>
        <button className="ml-auto h-6 w-[140px] border border-[#ccc] bg-gradient-to-b from-white to-[#e9e9e9] pt-0.5">New emulator</button>
        <div className="relative ml-[5px]">
          <select aria-label="Connect to Device" className="block h-6 w-[150px] appearance-none bg-[#efefef] pb-0.5 pl-1.5 text-[13px] text-[#333]"><option>Connect to Device...</option></select>
          <span className="pointer-events-none absolute right-[5px] top-2 border-x-[3px] border-t-[7px] border-x-transparent border-t-[#333]" />
        </div>
        <button aria-label="Device help" className="ml-[5px]">
          <svg width="16" height="28" viewBox="0 0 16 28"><path d="M11 0h3v3l1 1v23H9q-1-2-2 0H1V4q0-2 2-2h8z" fill="#85857f" /><rect x="3" y="5" width="10" height="18" fill="#b5cb66" /><text x="4" y="19" fontSize="11" fontWeight="bold" fill="#333">?</text></svg>
        </button>
        <label htmlFor="zoom" className="ml-[23px] w-[47px] pt-0.5 text-[11px] font-bold">Zoom</label>
        <div className="relative h-7 w-[142px]">
          <svg width="142" height="28" viewBox="0 0 142 28">
            <path d="M2 15h138" stroke="#c9d8a0" strokeWidth="5" strokeLinecap="round" /><path d="M3 14h52" stroke="#7fa05a" strokeWidth="2" /><path d="M60 14h80" stroke="#444" strokeWidth="3" />
            <path d="M15 12v6M29 12v6M43 12v6M71 12v6M84 12v6M98 12v6M112 12v6M126 12v6" stroke="#d4dcc0" />
            <text x="45" y="26" fontSize="9" fill="#333">100%</text>
            <circle cx="55" cy="14" r="6" fill="#b9b9b9" stroke="#666" strokeWidth="1.300" /><circle cx="55" cy="14" r="2.800" fill="#333" />
          </svg>
          <input id="zoom" type="range" defaultValue="40" className="absolute inset-0 w-full opacity-0" />
        </div>
      </div>
      <div className="flex min-h-0 flex-1 border-l border-t border-[#7a8a99] bg-[#eef1e0]">
        <div className="w-[225px] shrink-0 pt-[19px]">
          <div className="flex h-[17px] border-b border-[#888] leading-4">
            <button className="w-[67px] border border-b-0 border-[#888] bg-[#f5dcad] font-bold">Built-In</button>
            <button className="w-[79px] border border-b-0 border-[#ccc] bg-[#c0d678]">My Blocks</button>
            <button className="w-[79px] border border-b-0 border-[#ccc] bg-[#f7e9b6]">Advanced</button>
          </div>
          <div className="mt-[3px] border-t border-[#888]">
            {drawers.map(([name, bg]) => (
              <button key={name} className={`block h-[33px] w-full border border-[#d0d0d0] pt-0.5 ${bg}`}>{name}</button>
            ))}
          </div>
        </div>
        <div className="w-[5px] shrink-0 border-l border-white bg-[#ececec]">
          <svg width="4" height="20" viewBox="0 0 4 20"><path d="M4 3v7L0 6.500zM0 13l4 3.500L0 20z" fill="#35589a" /></svg>
        </div>
        <div className="relative flex min-w-0 flex-1 justify-end overflow-hidden border-l border-[#7a8a99] bg-[#eef5d3]">
          <Blocks />
          <MiniMap />
          <Trash />
          <div className="mr-1.5 mt-[7px] flex w-[10px] flex-col border-x border-[#9a9f86] bg-[#e0ecbf]">
            <div className="-mx-px h-[559px] rounded-full border border-[#a5b07a] bg-gradient-to-r from-[#c5d29c] via-[#b3c085] to-[#8f9c66]" />
          </div>
        </div>
      </div>
    </section>
  );
}

export default function App() {
  return (
    <div className="relative flex h-screen flex-col overflow-hidden bg-white">
      <TopPanel />
      <div className="flex min-h-0 flex-1">
        <Launcher />
        <div className="flex min-w-0 flex-1 flex-col">
          <BrowserChrome />
          <InventorPage />
          <NoticeBar />
        </div>
      </div>
      <BlocksEditor />
    </div>
  );
}
